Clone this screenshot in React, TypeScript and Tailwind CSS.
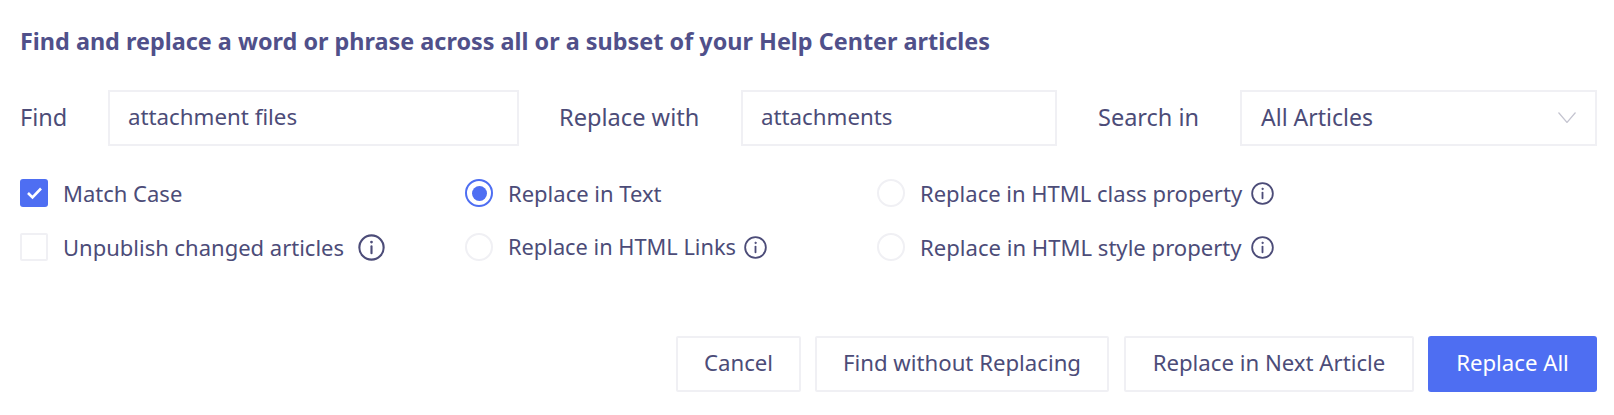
import React from "react";

function Info({ size = 23 }: { size?: number }) {
  return (
    <svg width={size} height={size} viewBox="0 0 24 24" fill="none" stroke="#4c4c78" strokeWidth="1.9" strokeLinecap="round" className="shrink-0">
      <circle cx="12" cy="12" r="10.8" />
      <path d="M12 11v6" />
      <circle cx="12" cy="7.2" r="0.7" fill="#4c4c78" strokeWidth="1" />
    </svg>
  );
}

function Radio({ checked = false }: { checked?: boolean }) {
  return checked ? (
    <span className="flex h-[28px] w-[28px] shrink-0 items-center justify-center rounded-full border-2 border-[#4e6ef2] bg-white">
      <span className="h-[15px] w-[15px] rounded-full bg-[#4e6ef2]" />
    </span>
  ) : (
    <span className="h-[28px] w-[28px] shrink-0 rounded-full border-2 border-[#f0f0f4] bg-white" />
  );
}

function Input({ value, className }: { value: string; className: string }) {
  return (
    <div className={"flex h-[56px] items-center border-2 border-[#f0f0f4] bg-white pb-[2px] pl-[18px] text-[22.3px] " + className}>
      {value}
    </div>
  );
}

function Button({ children, className }: { children: string; className: string }) {
  return (
    <button className={"flex h-[56px] items-center justify-center rounded-[2px] border-2 border-[#f0f0f4] bg-white pb-[3px] text-[22.2px] text-[#4c4c78] " + className}>
      {children}
    </button>
  );
}

export default function App() {
  return (
    <div className="h-[415px] w-[1614px] overflow-hidden bg-white pl-[20px] pr-[17px] text-[22px] leading-[30px] text-[#4c4c78] [font-family:'Noto_Sans',sans-serif]">
      <h1 className="pt-[26px] text-[23.4px] font-bold leading-[30px] text-[#50508a]">
        Find and replace a word or phrase across all or a subset of your Help Center articles
      </h1>

      <div className="mt-[34px] flex items-center">
        <span className="w-[88px] pb-[2px] text-[23.5px]">Find</span>
        <Input value="attachment files" className="w-[411px]" />
        <span className="ml-[40px] w-[182px] pb-[2px] text-[23.6px]">Replace with</span>
        <Input value="attachments" className="w-[316px]" />
        <span className="ml-[41px] w-[142px] pb-[2px] text-[23.5px]">Search in</span>
        <div className="flex h-[56px] w-[357px] items-center justify-between border-2 border-[#f0f0f4] bg-white pb-[2px] pl-[19px] pr-[19px] text-[23px]">
          All Articles
          <svg width="18" height="11" viewBox="0 0 18 11" fill="none" stroke="#c4c4d0" strokeWidth="1.2">
            <path d="M0.5 0.5 L9 10.5 L17.5 0.5" />
          </svg>
        </div>
      </div>

      <div className="mt-[33px] grid grid-cols-[445px_412px_auto] gap-y-[26px]">
        <div className="flex h-[28px] items-center">
          <span className="flex h-[28px] w-[28px] shrink-0 items-center justify-center rounded-[3px] bg-[#4e6ef2]">
            <svg width="17" height="14" viewBox="0 0 17 14" fill="none" stroke="white" strokeWidth="2.6">
              <path d="M2 7 L6.5 11.5 L15 2.5" />
            </svg>
          </span>
          <span className="ml-[15px]">Match Case</span>
        </div>
        <div className="flex h-[28px] items-center">
          <Radio checked />
          <span className="ml-[15px]">Replace in Text</span>
        </div>
        <div className="flex h-[28px] items-center">
          <Radio />
          <span className="ml-[15px]">Replace in HTML class property</span>
          <span className="ml-[9px]"><Info /></span>
        </div>

        <div className="flex h-[28px] items-center">
          <span className="h-[28px] w-[28px] shrink-0 rounded-[2px] border-2 border-[#f0f0f4] bg-white" />
          <span className="ml-[15px]">Unpublish changed articles</span>
          <span className="ml-[14px]"><Info size={27} /></span>
        </div>
        <div className="flex h-[28px] items-center">
          <Radio />
          <span className="ml-[15px] text-[21.8px]">Replace in HTML Links</span>
          <span className="ml-[8px]"><Info /></span>
        </div>
        <div className="flex h-[28px] items-center">
          <Radio />
          <span className="ml-[15px] text-[22.1px]">Replace in HTML style property</span>
          <span className="ml-[9px]"><Info /></span>
        </div>
      </div>

      <div className="mt-[75px] flex justify-end">
        <Button className="w-[125px]">Cancel</Button>
        <Button className="ml-[14px] w-[294px]">Find without Replacing</Button>
        <Button className="ml-[15px] w-[290px]">Replace in Next Article</Button>
        <button className="ml-[14px] flex h-[56px] w-[169px] items-center justify-center rounded-[3px] bg-[#4e6ef2] pb-[3px] text-[22.2px] text-white">
          Replace All
        </button>
      </div>
    </div>
  );
}
